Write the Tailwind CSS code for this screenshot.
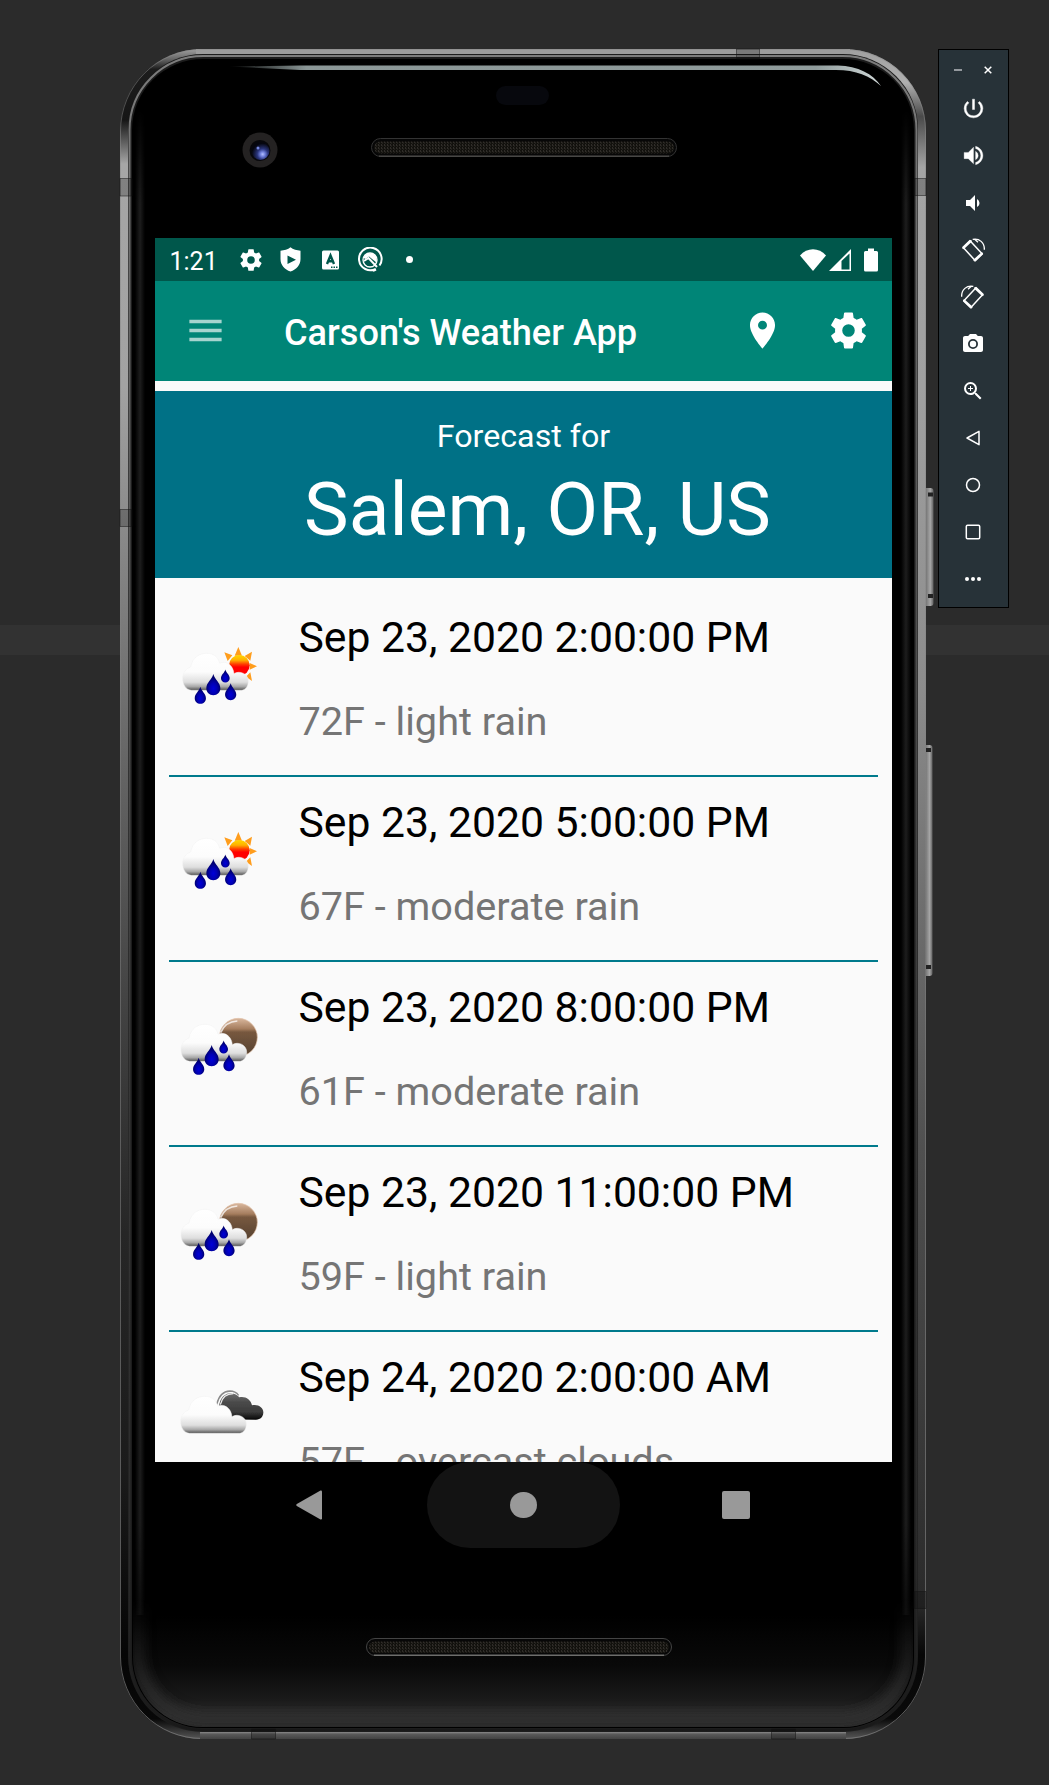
<!DOCTYPE html>
<html lang="en">
<head>
<meta charset="utf-8">
<title>Carson's Weather App</title>
<script src="https://cdn.jsdelivr.net/npm/@tailwindcss/browser@4"></script>
</head>
<body class="relative h-[1785px] w-[1049px] overflow-hidden bg-[#2b2b2b] font-[Roboto,sans-serif]">

<!-- shared weather artwork -->
<svg class="absolute size-0" aria-hidden="true">
  <defs>
    <linearGradient id="cloudFill" x1="0" y1="0" x2="0" y2="1">
      <stop offset="0" stop-color="#ffffff"/><stop offset=".5" stop-color="#fcfcfc"/><stop offset=".78" stop-color="#dedede"/><stop offset=".9" stop-color="#a8a8a8"/><stop offset="1" stop-color="#505050"/>
    </linearGradient>
    <linearGradient id="sunFill" x1="0" y1="0" x2="0" y2="1">
      <stop offset="0" stop-color="#ffd800"/><stop offset=".25" stop-color="#ffb000"/><stop offset=".45" stop-color="#ff3a00"/><stop offset=".6" stop-color="#ff0000"/>
    </linearGradient>
    <linearGradient id="moonFill" x1="0" y1="0" x2="0" y2="1">
      <stop offset="0" stop-color="#d9b79d"/><stop offset=".28" stop-color="#a57d5e"/><stop offset=".36" stop-color="#77583f"/><stop offset="1" stop-color="#54402f"/>
    </linearGradient>
    <linearGradient id="darkFill" x1="0" y1="0" x2="0" y2="1">
      <stop offset="0" stop-color="#6e6e6e"/><stop offset=".35" stop-color="#4a4a4a"/><stop offset=".7" stop-color="#3c3c3c"/><stop offset="1" stop-color="#050505"/>
    </linearGradient>
    <radialGradient id="dropFill" cx=".5" cy=".68" r=".5">
      <stop offset="0" stop-color="#0000d8"/><stop offset=".5" stop-color="#0000b4"/><stop offset="1" stop-color="#00006e"/>
    </radialGradient>
    <filter id="soft" x="-10%" y="-10%" width="120%" height="120%"><feGaussianBlur stdDeviation="1.8"/></filter>
    <path id="cloud" d="M124 271C106 268 98 252 98 236C98 217 109 206 122 201C128 171 149 160 170 160C192 160 205 172 209 190C228 180 250 196 252 221C270 210 295 222 295 243C295 258 288 268 276 271Z"/>
    <path id="drop" fill="url(#dropFill)" d="M0-32C4-15 21-7 21 11C21 23 12 32 0 32C-12 32-21 23-21 11C-21-7-4-15 0-32Z"/>
    <g id="rain">
      <use href="#cloud" fill="url(#cloudFill)" stroke="#f1f1f1" stroke-width="1.500" filter="url(#soft)"/>
      <g>
        <use href="#drop" transform="translate(190 254)"/>
        <use href="#drop" transform="translate(151 286) scale(.8)"/>
        <use href="#drop" transform="translate(226 228) scale(.62)"/>
        <use href="#drop" transform="translate(242 275) scale(.8)"/>
      </g>
    </g>
    <g id="rainDay">
      <g fill="#ff9d1c" filter="url(#soft)">
        <path d="M265 141L276 167H254ZM306 155L301 182L284 168ZM321 199L299 189V209ZM306 243L288 230L301 217ZM223 157L247 166L233 183Z"/>
        <circle cx="268" cy="196" r="31" fill="url(#sunFill)"/>
      </g>
      <use href="#rain"/>
    </g>
    <g id="rainNight">
      <g filter="url(#soft)">
        <circle cx="265" cy="172" r="57" fill="url(#moonFill)" stroke="#e3c3ab" stroke-width="2"/>
        <path d="M212 158C222 134 240 124 262 123" fill="none" stroke="#fff" stroke-width="5" opacity=".75"/>
      </g>
      <use href="#rain" transform="translate(-5 -27)"/>
    </g>
    <g id="overcast">
      <g filter="url(#soft)">
        <path fill="url(#darkFill)" d="M214 1318C204 1300 204 1274 214 1256C226 1236 252 1234 268 1252C286 1248 302 1258 306 1276C326 1272 341 1284 340 1298C339 1310 332 1318 318 1319Z"/>
        <path d="M200 1274C206 1246 222 1234 240 1233C250 1233 260 1238 266 1246" fill="none" stroke="#8a8a8a" stroke-width="4"/>
        <path d="M211 1274C216 1252 230 1241 250 1241" fill="none" stroke="#eee" stroke-width="4"/>
      </g>
      <use href="#cloud" transform="translate(-6 1089)" fill="url(#cloudFill)" stroke="#f1f1f1" stroke-width="1.500" filter="url(#soft)"/>
    </g>
  </defs>
</svg>

<!-- editor band behind the emulator -->
<div class="absolute inset-x-0 top-[625px] h-[30px] bg-[#323232]"></div>

<!-- device chassis -->
<svg class="absolute inset-0" width="1049" height="1785" viewBox="0 0 1049 1785" aria-hidden="true">
  <defs>
    <linearGradient id="edgeL" gradientUnits="userSpaceOnUse" x1="0" y1="49" x2="0" y2="1739">
      <stop offset="0" stop-color="#a0a0a0"/><stop offset=".006" stop-color="#666"/><stop offset=".012" stop-color="#1c1c1c"/><stop offset=".042" stop-color="#161616"/><stop offset=".068" stop-color="#a6a6a6"/><stop offset=".2" stop-color="#a2a2a2"/><stop offset=".3" stop-color="#858585"/><stop offset=".42" stop-color="#666"/><stop offset=".56" stop-color="#444"/><stop offset=".7" stop-color="#262626"/><stop offset=".84" stop-color="#1b1b1b"/><stop offset=".95" stop-color="#050505"/><stop offset=".988" stop-color="#080808"/><stop offset="1" stop-color="#555"/>
    </linearGradient>
    <linearGradient id="edgeR" gradientUnits="userSpaceOnUse" x1="0" y1="49" x2="0" y2="1739">
      <stop offset="0" stop-color="#a0a0a0"/><stop offset=".02" stop-color="#b0b0b0"/><stop offset=".04" stop-color="#4a4a4a"/><stop offset=".07" stop-color="#a4a4a4"/><stop offset=".2" stop-color="#a0a0a0"/><stop offset=".38" stop-color="#8c8c8c"/><stop offset=".5" stop-color="#707070"/><stop offset=".65" stop-color="#505050"/><stop offset=".8" stop-color="#3c3c3c"/><stop offset=".92" stop-color="#2a2a2a"/><stop offset=".95" stop-color="#060606"/><stop offset=".988" stop-color="#0a0a0a"/><stop offset="1" stop-color="#555"/>
    </linearGradient>
    <linearGradient id="rim" gradientUnits="userSpaceOnUse" x1="0" y1="49" x2="0" y2="1739">
      <stop offset="0" stop-color="#7d7d7d"/><stop offset=".3" stop-color="#555"/><stop offset=".6" stop-color="#383838"/><stop offset=".9" stop-color="#2a2a2a"/><stop offset="1" stop-color="#181818"/>
    </linearGradient>
    <linearGradient id="outline" gradientUnits="userSpaceOnUse" x1="0" y1="49" x2="0" y2="1739">
      <stop offset="0" stop-color="#8a8a8a" stop-opacity=".5"/><stop offset=".5" stop-color="#808080" stop-opacity=".5"/><stop offset="1" stop-color="#808080" stop-opacity=".7"/>
    </linearGradient>
    <linearGradient id="chin" x1="0" y1="0" x2="0" y2="1">
      <stop offset="0" stop-color="#000"/><stop offset=".45" stop-color="#090909"/><stop offset=".75" stop-color="#1a1a1a"/><stop offset=".9" stop-color="#2d2d2d"/><stop offset="1" stop-color="#282828"/>
    </linearGradient>
    <linearGradient id="side">
      <stop offset="0" stop-color="#000"/><stop offset=".5" stop-color="#1d1d1d"/><stop offset="1" stop-color="#000"/>
    </linearGradient>
    <linearGradient id="sideFade" gradientUnits="userSpaceOnUse" x1="0" y1="110" x2="0" y2="1680">
      <stop offset="0" stop-color="#000"/><stop offset=".06" stop-color="#fff"/><stop offset=".9" stop-color="#fff"/><stop offset="1" stop-color="#000"/>
    </linearGradient>
    <mask id="sideMask" maskUnits="userSpaceOnUse" x="120" y="100" width="806" height="1600"><rect x="120" y="100" width="806" height="1600" fill="url(#sideFade)"/></mask>
    <linearGradient id="glowFade" gradientUnits="userSpaceOnUse" x1="0" y1="1600" x2="0" y2="1700">
      <stop offset="0" stop-color="#000"/><stop offset="1" stop-color="#fff"/>
    </linearGradient>
    <mask id="glowMask" maskUnits="userSpaceOnUse" x="120" y="1600" width="806" height="140"><rect x="120" y="1600" width="806" height="140" fill="url(#glowFade)"/></mask>
    <linearGradient id="glint">
      <stop offset="0" stop-color="#8b9797" stop-opacity="0"/><stop offset=".12" stop-color="#8b9797"/><stop offset=".9" stop-color="#8f9b9b"/><stop offset="1" stop-color="#d0d8d8"/>
    </linearGradient>
    <linearGradient id="baseBar" x1="0" y1="0" x2="0" y2="1">
      <stop offset="0" stop-color="#8a8a8a"/><stop offset=".3" stop-color="#5a5a5a"/><stop offset="1" stop-color="#424242"/>
    </linearGradient>
    <linearGradient id="button">
      <stop offset="0" stop-color="#555"/><stop offset=".35" stop-color="#7e7e7e"/><stop offset=".7" stop-color="#a6a6a6"/><stop offset="1" stop-color="#606060"/>
    </linearGradient>
    <radialGradient id="lens" cx=".62" cy=".68" r=".6">
      <stop offset="0" stop-color="#b3bfff"/><stop offset=".22" stop-color="#7080dc"/><stop offset=".5" stop-color="#2a357c"/><stop offset="1" stop-color="#05060f"/>
    </radialGradient>
    <pattern id="mesh" width="3" height="3" patternUnits="userSpaceOnUse">
      <rect width="3" height="3" fill="#12110d"/><rect width="1" height="2" fill="#302d29"/><rect x="1" y="1" width="1" height="2" fill="#22201c"/>
    </pattern>
    <filter id="glow" x="-10%" y="-10%" width="120%" height="120%"><feGaussianBlur stdDeviation="6"/></filter>
    <clipPath id="leftHalf"><rect x="100" y="40" width="423" height="1710"/></clipPath>
    <clipPath id="rightHalf"><rect x="523" y="40" width="420" height="1710"/></clipPath>
    <clipPath id="glass"><rect x="133" y="60" width="780" height="1667" rx="70"/></clipPath>
  </defs>

  <rect x="923" y="488" width="10.500" height="118" rx="3" fill="url(#button)"/>
  <path d="M928 494.500h5M928 596h5" stroke="#222" stroke-width="4"/>
  <rect x="923" y="745" width="9.500" height="231" rx="3" fill="url(#button)"/>
  <path d="M926 750h5M926 967h5" stroke="#222" stroke-width="4"/>

  <rect x="120" y="49" width="806" height="1690" rx="82" fill="url(#edgeL)" clip-path="url(#leftHalf)"/>
  <rect x="120" y="49" width="806" height="1690" rx="82" fill="url(#edgeR)" clip-path="url(#rightHalf)"/>
  <path d="M196 49H850V54H196Z" fill="#9c9c9c"/>
  <rect x="120.500" y="49.500" width="805" height="1689" rx="81.500" fill="none" stroke="url(#outline)"/>
  <rect x="128" y="54" width="790" height="1678" rx="75" fill="#1c1c1c"/>
  <rect x="129.500" y="56" width="787" height="1674" rx="74" fill="none" stroke="url(#rim)" stroke-width="2"/>
  <rect x="132" y="59" width="782" height="1669" rx="71" fill="#000"/>
  <g clip-path="url(#glass)">
    <g mask="url(#sideMask)">
      <rect x="135" y="110" width="10" height="1570" fill="url(#side)"/>
      <rect x="901" y="110" width="10" height="1570" fill="url(#side)"/>
    </g>
    <rect x="132" y="1615" width="782" height="112" fill="url(#chin)"/>
    <g mask="url(#glowMask)"><rect x="138" y="1400" width="770" height="320" rx="68" fill="none" stroke="#2e2e2e" stroke-width="12" filter="url(#glow)"/></g>
  </g>
  <rect x="200" y="1732" width="646" height="7" fill="url(#baseBar)"/>
  <path d="M228 66.500L300 65.500H838C858 66 873 74 881 86C870 76 856 70 836 70H300Z" fill="url(#glint)"/>

  <!-- antenna bands -->
  <g fill="#000" fill-opacity=".22" stroke="#111" stroke-opacity=".5">
    <path d="M120 178.500h12v17.500h-12zM120 509.500h12v17h-12zM736.500 49v10h23V49zM914 178.500h12v17h-12zM914 1591.500h12v17h-12zM251.500 1729v10h24v-10zM771.500 1729v10h24v-10z"/>
  </g>

  <rect x="496" y="86" width="53" height="19" rx="9.500" fill="#07080d"/>
  <circle cx="260" cy="150" r="17.500" fill="#242222"/>
  <circle cx="260" cy="150.500" r="10.500" fill="#07070b"/>
  <circle cx="260.500" cy="151" r="9" fill="url(#lens)"/>
  <circle cx="258" cy="148" r="1.500" fill="#7688e0"/>

  <rect x="371.500" y="138.500" width="305" height="18" rx="9" fill="#070707" stroke="#333"/>
  <rect x="374" y="141.500" width="300" height="12" rx="6" fill="url(#mesh)"/>
  <path d="M379 156.200h290" stroke="#514f4c" stroke-width="1.300"/>
  <rect x="366.500" y="1638.500" width="305" height="17" rx="8.500" fill="#070707" stroke="#444"/>
  <rect x="369" y="1641.500" width="300" height="11.500" rx="5.700" fill="url(#mesh)"/>
  <path d="M374 1655.200h290" stroke="#6e6e6c" stroke-width="1.500"/>
</svg>

<!-- phone screen -->
<main class="relative mt-[238px] ml-[155px] flex h-[1224px] w-[737px] flex-col overflow-hidden bg-[#fafafa]">
  <div class="flex h-[43px] shrink-0 items-center bg-[#00574b] pr-[14px] pl-[14px] text-white">
    <span class="w-[70px] pt-[3px] pl-[0.500px] text-[25px] leading-[43px]">1:21</span>
    <svg class="-ml-[1.500px] size-[26px]" viewBox="0 0 24 24" fill="currentColor"><path d="M19.430 12.980c.04-.32.07-.64.07-.98s-.03-.66-.07-.98l2.110-1.650c.19-.15.24-.42.12-.64l-2-3.460c-.12-.22-.39-.3-.61-.22l-2.490 1c-.52-.4-1.080-.73-1.690-.98l-.38-2.650A.488.488 0 0 0 14 2h-4c-.25 0-.46.18-.49.42l-.38 2.650c-.61.25-1.170.59-1.690.98l-2.490-1c-.23-.09-.49 0-.61.22l-2 3.460c-.13.22-.07.49.12.64l2.110 1.650c-.04.32-.07.65-.07.98s.03.66.07.98l-2.110 1.650c-.19.15-.24.42-.12.64l2 3.460c.12.22.39.3.61.22l2.490-1c.52.4 1.080.73 1.690.98l.38 2.650c.03.24.24.42.49.42h4c.25 0 .46-.18.49-.42l.38-2.650c.61-.25 1.170-.59 1.690-.98l2.490 1c.23.09.49 0 .61-.22l2-3.460c.12-.22.07-.49-.12-.64l-2.110-1.650zM12 15.500a3.500 3.500 0 1 1 0-7 3.500 3.500 0 0 1 0 7z"/></svg>
    <svg class="ml-[16px] h-[25px] w-[21px]" viewBox="0 0 21 25" fill="currentColor"><path fill-rule="evenodd" d="M10.500.3C13 2.500 17 3.500 20.500 3.700V12c0 6-4 10.500-10 12.600C4.500 22.500.5 18 .5 12V3.700C4 3.500 8 2.500 10.500.3ZM7.500 8.500v8.500l8.500-4.300Z"/></svg>
    <svg class="ml-[21px] h-[20px] w-[17px]" viewBox="0 0 17 20"><rect y=".5" width="17" height="19" rx="1.500" fill="#fff"/><path d="M5 14L8.500 5.500L12 14M6.200 11.200h4.600" fill="none" stroke="#00574b" stroke-width="2.400"/><path d="M9 17.300h6.500" stroke="#00574b" stroke-width="1.400" stroke-dasharray="1.500 1"/></svg>
    <svg class="ml-[18px] size-[26px]" viewBox="0 0 26 26" fill="none" stroke="#fff"><path d="M18.800 21.800A11.300 11.300 0 1 1 22.500 18.500M16 23.800A11.300 11.300 0 0 0 19 22.700" stroke-width="2"/><circle cx="13" cy="13" r="7" stroke-width="1.300"/><path d="M6.500 11C8 5 17 4.500 19.500 10.500L20 16L12 9.500L8.500 12Z" fill="#fff" stroke="none"/><path d="M7 14L11.500 11L20 20" stroke-width="2"/></svg>
    <span class="ml-[23px] size-[7px] rounded-full bg-white"></span>
    <svg class="ml-auto h-[22px] w-[26px]" viewBox="0 0 26 22" fill="currentColor"><path d="M13 22L0 6.500C7-2 19-2 26 6.500Z"/></svg>
    <svg class="ml-[3px] h-[22px] w-[22px]" viewBox="0 0 22 22"><path d="M0 22L22 0V22Z" fill="#fff"/><path d="M12.500 12V20.500H20.500V4.500Z" fill="#00574b"/></svg>
    <svg class="ml-[13px] h-[24px] w-[14px]" viewBox="0 0 14 24" fill="currentColor"><path d="M4 .5h6V3h2.500Q14 3 14 4.500v17.500q0 1.500-1.500 1.500h-11Q0 23.500 0 22V4.500Q0 3 1.500 3H4Z"/></svg>
  </div>

  <header class="flex h-[100px] shrink-0 items-center bg-[#008577] pb-[1px] text-white">
    <svg class="ml-[28.500px] size-[43px]" viewBox="0 0 24 24" fill="#fff" fill-opacity=".65"><path d="M3 18h18v-2H3v2zm0-5h18v-2H3v2zm0-7v2h18V6H3z"/></svg>
    <h1 class="ml-[57.500px] pt-[4px] text-[36.150px] leading-[42px] font-medium whitespace-nowrap">Carson's Weather App</h1>
    <svg class="ml-auto size-[43px]" viewBox="0 0 24 24" fill="currentColor"><path d="M12 2C8.130 2 5 5.130 5 9c0 5.250 7 13 7 13s7-7.750 7-13c0-3.870-3.130-7-7-7zm0 9.500a2.500 2.500 0 0 1 0-5 2.500 2.500 0 0 1 0 5z"/></svg>
    <svg class="mr-[22px] ml-[43.500px] size-[43px]" viewBox="0 0 24 24" fill="currentColor"><path d="M19.430 12.980c.04-.32.07-.64.07-.98s-.03-.66-.07-.98l2.110-1.650c.19-.15.24-.42.12-.64l-2-3.460c-.12-.22-.39-.3-.61-.22l-2.490 1c-.52-.4-1.080-.73-1.690-.98l-.38-2.650A.488.488 0 0 0 14 2h-4c-.25 0-.46.18-.49.42l-.38 2.650c-.61.25-1.170.59-1.690.98l-2.490-1c-.23-.09-.49 0-.61.22l-2 3.460c-.13.22-.07.49.12.64l2.110 1.650c-.04.32-.07.65-.07.98s.03.66.07.98l-2.110 1.650c-.19.15-.24.42-.12.64l2 3.460c.12.22.39.3.61.22l2.490-1c.52.4 1.080.73 1.690.98l.38 2.650c.03.24.24.42.49.42h4c.25 0 .46-.18.49-.42l.38-2.650c.61-.25 1.170-.59 1.690-.98l2.490 1c.23.09.49 0 .61-.22l2-3.460c.12-.22.07-.49-.12-.64l-2.110-1.650zM12 15.500a3.500 3.500 0 1 1 0-7 3.500 3.500 0 0 1 0 7z"/></svg>
  </header>

  <section class="mt-[10px] h-[187px] shrink-0 bg-[#007186] pt-[26px] text-center text-white">
    <p class="text-[32.200px] leading-[38px]">Forecast for</p>
    <p class="pt-[12px] pl-[28px] text-[75px] leading-[84px] whitespace-nowrap">Salem, OR, US</p>
  </section>

  <ul class="px-[14px] pt-[14px]">
    <li class="flex h-[185px] border-b-2 border-[#007a8c]">
      <svg class="h-[183px] w-[129px] shrink-0" viewBox="57 -24 387 549"><use href="#rainDay"/></svg>
      <div class="flex flex-col gap-[37px] pt-[20px] pl-[0.500px] whitespace-nowrap"><h2 class="text-[42.700px] leading-[50px] text-black">Sep 23, 2020 2:00:00 PM</h2><p class="text-[39.650px] leading-[46px] text-[#757575]">72F - light rain</p></div>
    </li>
    <li class="flex h-[185px] border-b-2 border-[#007a8c]">
      <svg class="h-[183px] w-[129px] shrink-0" viewBox="57 -24 387 549"><use href="#rainDay"/></svg>
      <div class="flex flex-col gap-[37px] pt-[20px] pl-[0.500px] whitespace-nowrap"><h2 class="text-[42.700px] leading-[50px] text-black">Sep 23, 2020 5:00:00 PM</h2><p class="text-[39.650px] leading-[46px] text-[#757575]">67F - moderate rain</p></div>
    </li>
    <li class="flex h-[185px] border-b-2 border-[#007a8c]">
      <svg class="h-[183px] w-[129px] shrink-0" viewBox="57 -54 387 549"><use href="#rainNight"/></svg>
      <div class="flex flex-col gap-[37px] pt-[20px] pl-[0.500px] whitespace-nowrap"><h2 class="text-[42.700px] leading-[50px] text-black">Sep 23, 2020 8:00:00 PM</h2><p class="text-[39.650px] leading-[46px] text-[#757575]">61F - moderate rain</p></div>
    </li>
    <li class="flex h-[185px] border-b-2 border-[#007a8c]">
      <svg class="h-[183px] w-[129px] shrink-0" viewBox="57 -54 387 549"><use href="#rainNight"/></svg>
      <div class="flex flex-col gap-[37px] pt-[20px] pl-[0.500px] whitespace-nowrap"><h2 class="text-[42.700px] leading-[50px] text-black">Sep 23, 2020 11:00:00 PM</h2><p class="text-[39.650px] leading-[46px] text-[#757575]">59F - light rain</p></div>
    </li>
    <li class="flex h-[185px]">
      <svg class="h-[183px] w-[129px] shrink-0" viewBox="57 1056 387 549"><use href="#overcast"/></svg>
      <div class="flex flex-col gap-[37px] pt-[20px] pl-[0.500px] whitespace-nowrap"><h2 class="text-[42.700px] leading-[50px] text-black">Sep 24, 2020 2:00:00 AM</h2><p class="text-[39.650px] leading-[46px] text-[#757575]">57F - overcast clouds</p></div>
    </li>
  </ul>
</main>

<!-- navigation bar -->
<nav class="relative ml-[155px] flex h-[86px] w-[737px] items-center">
  <svg class="ml-[141px] h-[30px] w-[26px]" viewBox="0 0 26 30" fill="#999"><path d="M24.500.6Q26 .2 26 1.800V28.200Q26 29.800 24.500 29.400L.8 16Q-.3 15 .8 14Z"/></svg>
  <div class="ml-[105px] flex h-[86px] w-[193px] items-center justify-center rounded-full bg-[#131313]"><span class="size-[26.500px] rounded-full bg-[#999]"></span></div>
  <span class="ml-[102px] size-[28px] rounded-[2px] bg-[#999]"></span>
</nav>

<!-- emulator toolbar -->
<aside class="absolute top-[49px] left-[938px] flex h-[559px] w-[71px] flex-col items-center border border-black bg-[#273238] pr-[1px] text-white">
  <div class="flex h-[35px] w-full shrink-0 items-center justify-between pt-[5px] pr-[15px] pl-[15px]">
    <span class="h-[2px] w-[8px] bg-[#94999e]"></span>
    <svg class="size-[8px]" viewBox="0 0 8 8" stroke="#fff" stroke-width="1.500"><path d="M.7.7l6.600 6.600M7.300.7L.7 7.300"/></svg>
  </div>
  <div class="flex h-[47px] items-center"><svg class="size-[25px]" viewBox="0 0 24 24" fill="currentColor" stroke="currentColor" stroke-width=".4"><path d="M13 3h-2v10h2V3zm4.830 2.170l-1.420 1.420A6.920 6.920 0 0 1 19 12c0 3.870-3.130 7-7 7A6.995 6.995 0 0 1 7.580 6.580L6.170 5.170A8.932 8.932 0 0 0 3 12a9 9 0 0 0 18 0c0-2.740-1.230-5.180-3.170-6.830z"/></svg></div>
  <div class="flex h-[47px] items-center"><svg class="size-[25px]" viewBox="0 0 24 24" fill="currentColor" stroke="currentColor" stroke-width=".3"><path d="M3 9v6h4l5 5V4L7 9H3zm13.500 3A4.500 4.500 0 0 0 14 7.970v8.050c1.480-.73 2.500-2.250 2.500-4.020zM14 3.230v2.060c2.890.86 5 3.540 5 6.710s-2.110 5.850-5 6.710v2.060c4.010-.91 7-4.490 7-8.770s-2.990-7.860-7-8.770z"/></svg></div>
  <div class="flex h-[47px] items-center"><svg class="size-[24px]" viewBox="0 0 24 24" fill="currentColor"><path d="M18.500 12A4.500 4.500 0 0 0 16 7.970v8.050c1.480-.73 2.500-2.250 2.500-4.020zM5 9v6h4l5 5V4L9 9H5z"/></svg></div>
  <div class="flex h-[47px] items-center"><svg class="size-[24px]" viewBox="123 594 72 72" fill="none" stroke="currentColor"><path d="M150 602L129 622L166 662L187 642Z" stroke-width="4.500" stroke-linejoin="round"/><path d="M152 603.500L130.500 624M185.500 640.500L164 660.500" stroke-width="7" stroke-linecap="round"/><path d="M158 598C178 594 194 608 193 629M164 598L174 607" stroke-width="4"/></svg></div>
  <div class="flex h-[47px] items-center"><svg class="size-[24px]" viewBox="123 594 72 72" fill="none" stroke="currentColor"><g transform="translate(318 0) scale(-1 1)"><path d="M150 602L129 622L166 662L187 642Z" stroke-width="4.500" stroke-linejoin="round"/><path d="M152 603.500L130.500 624M185.500 640.500L164 660.500" stroke-width="7" stroke-linecap="round"/><path d="M158 598C178 594 194 608 193 629M164 598L174 607" stroke-width="4"/></g></svg></div>
  <div class="flex h-[47px] items-center"><svg class="size-[24px]" viewBox="0 0 24 24" fill="currentColor"><circle cx="12" cy="12" r="3.200"/><path d="M9 2L7.170 4H4c-1.100 0-2 .9-2 2v12c0 1.100.9 2 2 2h16c1.100 0 2-.9 2-2V6c0-1.100-.9-2-2-2h-3.170L15 2H9zm3 15a5 5 0 1 1 0-10 5 5 0 0 1 0 10z"/></svg></div>
  <div class="flex h-[47px] items-center"><svg class="size-[24px]" viewBox="0 0 24 24" fill="currentColor"><path d="M15.500 14h-.79l-.28-.27A6.471 6.471 0 0 0 16 9.500 6.500 6.500 0 1 0 9.500 16c1.610 0 3.090-.59 4.230-1.570l.27.28v.79l5 4.990L20.490 19l-4.990-5zm-6 0C7.010 14 5 11.990 5 9.500S7.010 5 9.500 5 14 7.010 14 9.500 11.990 14 9.500 14zm2.500-4h-2v2H9v-2H7V9h2V7h1v2h2v1z"/></svg></div>
  <div class="flex h-[47px] items-center"><svg class="size-[24px]" viewBox="0 0 24 24" fill="none" stroke="currentColor" stroke-width="1.500" stroke-linejoin="round"><path d="M18 5.300V18.700L6 12Z"/></svg></div>
  <div class="flex h-[47px] items-center"><svg class="size-[24px]" viewBox="0 0 24 24" fill="none" stroke="currentColor" stroke-width="1.500"><circle cx="12" cy="12" r="6.500"/></svg></div>
  <div class="flex h-[47px] items-center"><svg class="size-[24px]" viewBox="0 0 24 24" fill="none" stroke="currentColor" stroke-width="1.500"><rect x="5.300" y="5.300" width="13.400" height="13.400" rx="1.200"/></svg></div>
  <div class="flex h-[47px] items-center"><svg class="size-[24px]" viewBox="0 0 24 24" fill="currentColor"><circle cx="6" cy="12" r="2"/><circle cx="12" cy="12" r="2"/><circle cx="18" cy="12" r="2"/></svg></div>
</aside>
</body>
</html>
